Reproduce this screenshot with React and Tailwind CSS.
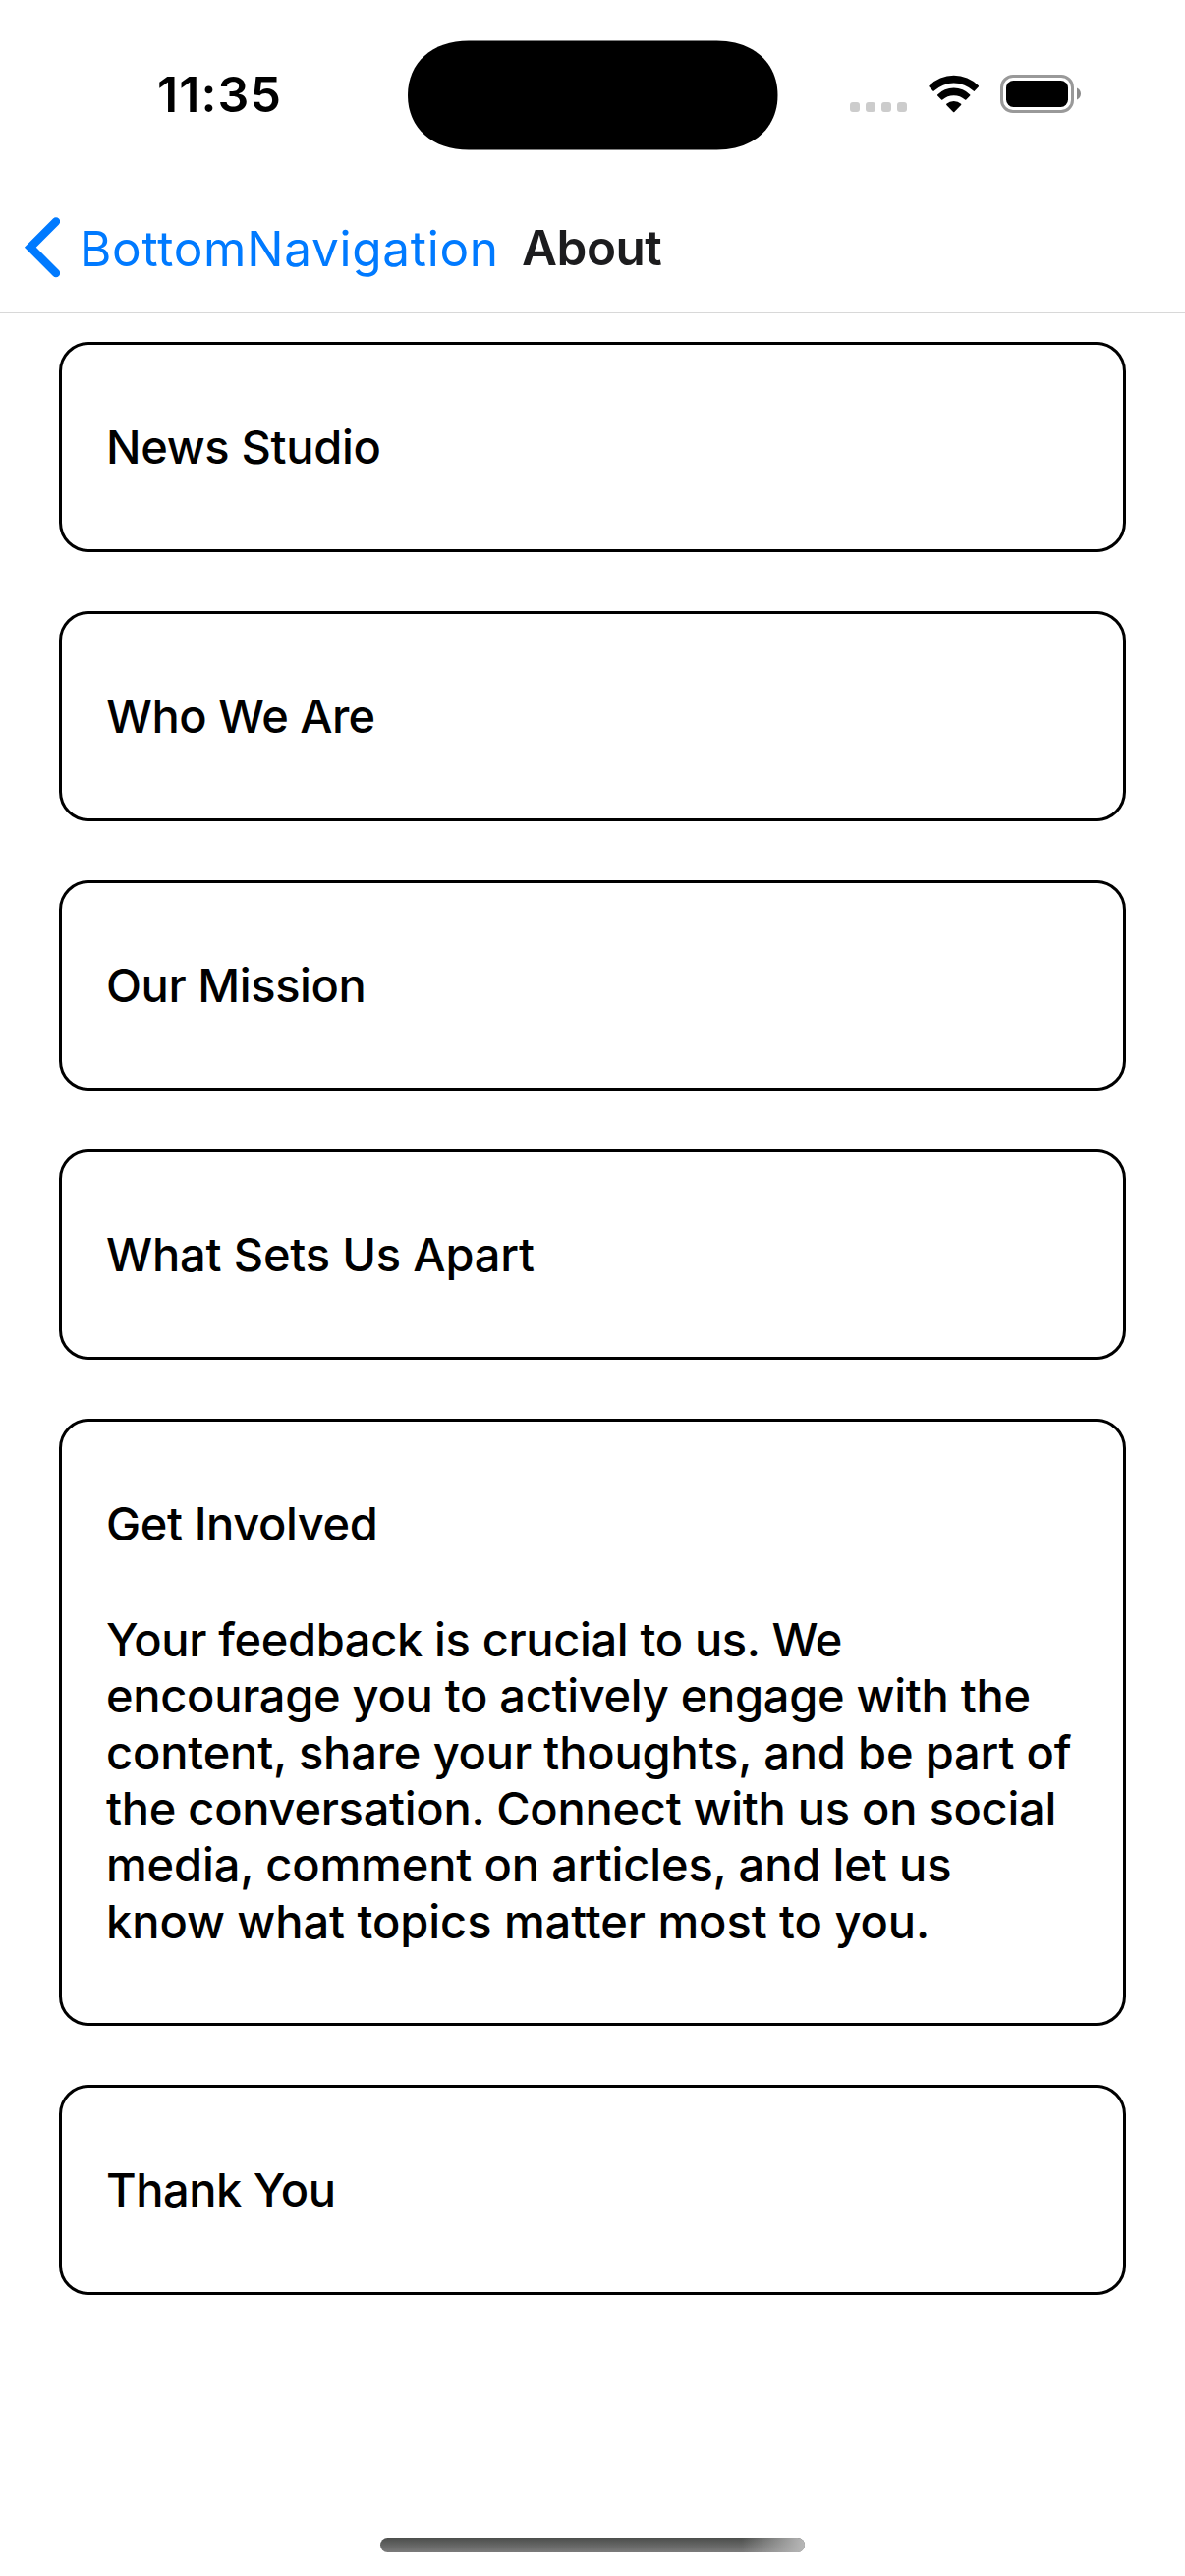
const sections = [
  { title: "News Studio", tracking: "tracking-[-0.33px]" },
  { title: "Who We Are", tracking: "tracking-[-0.58px]" },
  { title: "Our Mission", tracking: "tracking-[-0.41px]" },
  { title: "What Sets Us Apart", tracking: "tracking-[-0.18px]" },
  {
    title: "Get Involved",
    tracking: "tracking-[-0.39px]",
    body: [
      { text: "Your feedback is crucial to us. We", tracking: "tracking-[-0.35px]" },
      { text: "encourage you to actively engage with the", tracking: "tracking-[-0.3px]" },
      { text: "content, share your thoughts, and be part of", tracking: "tracking-[-0.17px]" },
      { text: "the conversation. Connect with us on social", tracking: "tracking-[-0.28px]" },
      { text: "media, comment on articles, and let us", tracking: "tracking-[-0.14px]" },
      { text: "know what topics matter most to you.", tracking: "tracking-[-0.06px]" },
    ],
  },
  { title: "Thank You", tracking: "tracking-[-0.5px]" },
];

function DynamicIsland() {
  return (
    <svg className="mt-[41px] ml-[115px] h-[112px] w-[377px] shrink-0" viewBox="0 0 377 112">
      <path d="M62 .5H314.5C351.5 .5 376.5 22.5 376.5 56S351.5 111.5 314.5 111.5H62C25 111.5 0 89.5 0 56S25 .5 62 .5Z" fill="#000" />
    </svg>
  );
}

function CellularDots() {
  return (
    <div className="mt-[104px] ml-[73px] flex gap-[6px]">
      {[0, 1, 2, 3].map((i) => (
        <span key={i} className="size-[10px] rounded-[3px] bg-[#cccccc]" />
      ))}
    </div>
  );
}

function WifiIcon() {
  return (
    <svg className="mt-[76px] ml-[22px] h-[39px] w-[52px] shrink-0" viewBox="945.3 76 52 39">
      <path d="M945.8 87.3A35.5 35.5 0 0 1 996.2 87.3Q996.6 88 996 88.6L992 92.7Q991.5 93.1 991 92.6A29 29 0 0 0 951 92.6Q950.5 93.1 950 92.7L946 88.6Q945.4 88 945.8 87.3Z" />
      <path d="M954.4 96.4A23.4 23.4 0 0 1 987.6 96.4Q988 97 987.5 97.6L983.6 101.6Q983 102.1 982.4 101.6A17.2 17.2 0 0 0 959.6 101.6Q959 102.1 958.4 101.6L954.5 97.6Q954 97 954.4 96.4Z" />
      <path d="M963.6 105.8A11 11 0 0 1 978.4 105.8Q978.9 106.4 978.4 107L971.6 114Q971 114.5 970.4 114L963.6 107Q963.1 106.4 963.6 105.8Z" />
    </svg>
  );
}

function BatteryIcon() {
  return (
    <div className="mt-[76px] ml-[21px] flex h-[39px] items-center gap-[3px]">
      <div className="h-[39px] w-[75px] rounded-[13px] border-3 border-[#999999] p-[3px]">
        <div className="h-full w-full rounded-[7.5px] bg-black" />
      </div>
      <svg className="h-[13px] w-[4px]" viewBox="0 0 4 13">
        <path d="M0 .5C2.3 1.4 4 3.7 4 6.5S2.3 11.6 0 12.5Z" fill="#8c8c8c" />
      </svg>
    </div>
  );
}

function StatusBar() {
  return (
    <div className="flex h-[177px] items-start">
      <div className="mt-[66px] ml-[160px] w-[140px] text-[50px] leading-[60px] font-semibold tracking-[1.1px] whitespace-nowrap">
        11:35
      </div>
      <DynamicIsland />
      <CellularDots />
      <WifiIcon />
      <BatteryIcon />
    </div>
  );
}

function NavHeader() {
  return (
    <header className="flex h-[142px] items-start border-b border-[#d8d8d8]">
      <button className="flex items-start text-[#007aff]">
        <svg className="mt-[43px] ml-[24px] h-[64px] w-[37px]" viewBox="24 220 37 64">
          <path d="M57 225.5L30.8 251.7L57 278" fill="none" stroke="currentColor" strokeWidth="8.4" strokeLinecap="round" strokeLinejoin="miter" />
        </svg>
        <span className="mt-[46px] ml-[20px] w-[450px] text-left text-[49.5px] leading-[60px] tracking-[0.72px] whitespace-nowrap">
          BottomNavigation
        </span>
      </button>
      <h1 className="mt-[45px] text-[49.5px] leading-[60px] font-semibold tracking-[-0.5px] text-[#1c1c1e]">
        About
      </h1>
    </header>
  );
}

function Card({ section }) {
  return (
    <section className="flex flex-col gap-[60px] rounded-[30px] border-3 border-black py-[75px] pl-[45px] text-[47px] font-medium whitespace-nowrap">
      <h2 className={`leading-[58px] ${section.tracking}`}>{section.title}</h2>
      {section.body && (
        <p className="leading-[57.333px]">
          {section.body.map((line) => (
            <span key={line.text} className={`block ${line.tracking}`}>
              {line.text}
            </span>
          ))}
        </p>
      )}
    </section>
  );
}

export default function App() {
  return (
    <div className="flex h-[2622px] w-[1206px] flex-col overflow-hidden bg-white font-['Inter',sans-serif] text-black">
      <StatusBar />
      <NavHeader />
      <main className="flex flex-1 flex-col gap-[60px] px-[60px] pt-[29px]">
        {sections.map((section) => (
          <Card key={section.title} section={section} />
        ))}
      </main>
      <div className="mb-[24px] h-[15px] w-[432px] self-center overflow-hidden rounded-full bg-linear-to-b from-[#4c4e4c] to-[#7c7c7c]">
        <div className="ml-auto h-full w-[64px] bg-linear-to-r from-[#b8b8b8]/0 to-[#b8b8b8]" />
      </div>
    </div>
  );
}
